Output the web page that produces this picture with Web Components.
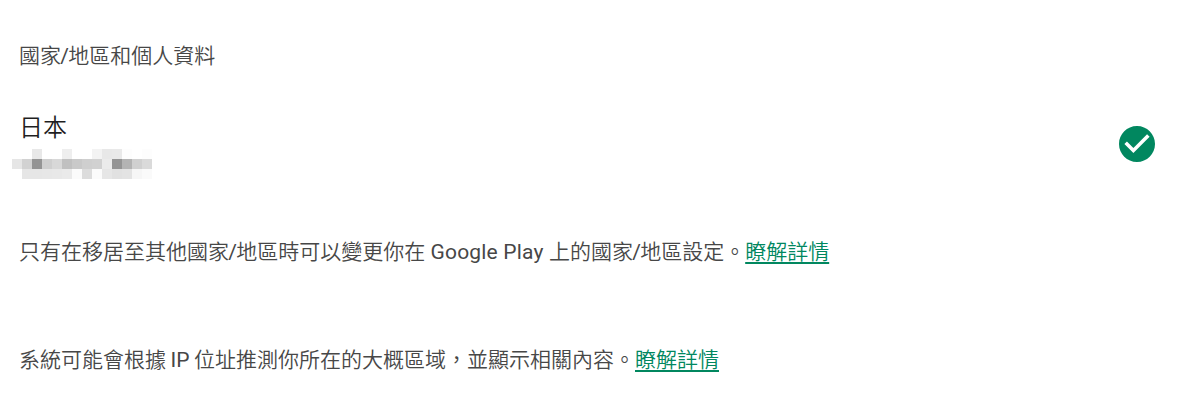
<!DOCTYPE html>
<html lang="zh-Hant">
<head>
<meta charset="utf-8">
<title>國家/地區和個人資料</title>
<style>
  body {
    margin: 0;
    background: #fff;
    font-family: 'Noto Sans CJK TC DemiLight', 'Noto Sans CJK TC', sans-serif;
    font-weight: 350;
  }
</style>
</head>
<body>
<country-settings>
  <span slot="heading">國家<latin-text my-width="7.3">/</latin-text>地區和個人資料</span>
  <country-item slot="items" my-name="日本"></country-item>
  <settings-note slot="notes">只有在移居至其他國家<latin-text my-width="7.3">/</latin-text>地區時可以變更你在<latin-text my-width="123.6" my-space="0.2px">Google Play</latin-text>上的國家<latin-text my-width="7.3">/</latin-text>地區設定。<more-link>瞭解詳情</more-link></settings-note>
  <settings-note slot="notes">系統可能會根據<latin-text my-width="28">IP</latin-text>位址推測你所在的大概區域，並顯示相關內容。<more-link>瞭解詳情</more-link></settings-note>
</country-settings>

<script>
'use strict';

class BaseElement extends HTMLElement {
  constructor() {
    super();

    const template = document.createElement('template');
    template.innerHTML = this.render();
    this.attachShadow({ mode: 'open' });
    this.shadowRoot.appendChild(template.content.cloneNode(true));
  }
}

class CountrySettings extends BaseElement {
  render() {
    return `
      <style>
        :host {
          display: flex;
          flex-direction: column;
          box-sizing: border-box;
          height: 414px;
          padding: 38px 44px 0 19px;
          color: #474747;
          font-size: 21px;
          line-height: 32px;
          white-space: nowrap;
        }
        h2 {
          height: 32px;
          margin: 0 0 39px;
          font: inherit;
        }
        .notes {
          display: flex;
          flex-direction: column;
          gap: 76px;
          margin-top: 55px;
        }
      </style>
      <h2><slot name="heading"></slot></h2>
      <slot name="items"></slot>
      <div class="notes"><slot name="notes"></slot></div>
    `;
  }
}

class CountryItem extends BaseElement {
  render() {
    return `
      <style>
        :host {
          display: flex;
          align-items: center;
          justify-content: space-between;
          height: 70px;
        }
        .name {
          color: #1f1f1f;
          font-size: 24px;
          line-height: 34px;
        }
        pixel-mask {
          margin: 6px 0 0 -7px;
        }
      </style>
      <div>
        <div class="name">${this.getAttribute('my-name') || ''}</div>
        <pixel-mask></pixel-mask>
      </div>
      <check-badge></check-badge>
    `;
  }
}

// Gray levels of the mosaic that hides the account name, row by row
const mask = [
  'ff ff e8 ff ff ee ff ff f3 e8 e9 fd ff fd',
  'e6 d2 94 cf d8 c0 c9 cf d1 eb 94 b3 d0 da',
  'ff e6 e6 e7 e8 ea fb dc fb e6 e1 e3 f6 fa',
];

class PixelMask extends BaseElement {
  render() {
    return `
      <style>
        :host {
          display: grid;
          grid-template-columns: repeat(14, 10px);
          grid-auto-rows: 10px;
        }
      </style>
      ${mask
        .join(' ')
        .split(' ')
        .map((level) => `<i style="background: #${level.repeat(3)}"></i>`)
        .join('')}
    `;
  }
}

class CheckBadge extends BaseElement {
  render() {
    return `
      <style>
        :host {
          display: block;
          width: 36px;
          height: 36px;
        }
        svg {
          display: block;
          fill: #01875f;
        }
      </style>
      <svg width="36" height="36" viewBox="2 2 20 20">
        <path d="M12 2C6.48 2 2 6.48 2 12s4.48 10 10 10 10-4.48 10-10S17.52 2 12 2zm-2 15l-5-5 1.41-1.41L10 14.17l7.59-7.59L19 8l-9 9z"/>
      </svg>
    `;
  }
}

class SettingsNote extends BaseElement {
  render() {
    return `
      <style>
        :host {
          display: block;
          height: 32px;
        }
      </style>
      <slot></slot>
    `;
  }
}

// Inline elements: no whitespace around the slot, it would be drawn as a space
class LatinText extends BaseElement {
  render() {
    return `<style>
        :host {
          display: inline-flex;
          justify-content: center;
          width: ${this.getAttribute('my-width')}px;
          font-family: Roboto, sans-serif;
          font-weight: 400;
          letter-spacing: ${this.getAttribute('my-space') || 'normal'};
        }
      </style><slot></slot>`;
  }
}

class MoreLink extends BaseElement {
  render() {
    return `<style>
        :host {
          display: inline;
        }
        a {
          color: #01875f;
          text-decoration: underline;
          text-decoration-thickness: 2px;
          text-decoration-skip-ink: none;
          text-underline-offset: 3px;
        }
      </style><a href="#"><slot></slot></a>`;
  }
}

customElements.define('pixel-mask', PixelMask);
customElements.define('check-badge', CheckBadge);
customElements.define('latin-text', LatinText);
customElements.define('more-link', MoreLink);
customElements.define('settings-note', SettingsNote);
customElements.define('country-item', CountryItem);
customElements.define('country-settings', CountrySettings);
</script>
</body>
</html>
